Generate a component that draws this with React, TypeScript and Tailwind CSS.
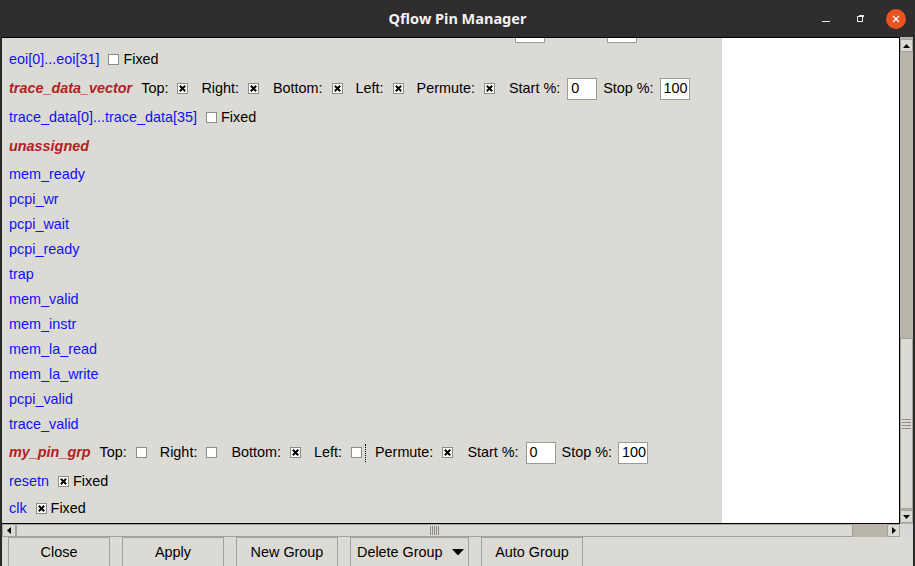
import React from "react";

const CB = ({ on = false }: { on?: boolean }) => (
  <svg width="11" height="11" viewBox="0 0 11 11" className="block shrink-0">
    <rect x="0.5" y="0.5" width="10" height="10" fill="#ffffff" stroke="#8e8c87" />
    {on && (
      <path d="M2.8 2.8 L8.2 8.2 M8.2 2.8 L2.8 8.2" stroke="#000000" strokeWidth="2" />
    )}
  </svg>
);

const Entry = ({ v, hide = false }: { v: string; hide?: boolean }) => (
  <div className="flex h-[22px] w-[30px] shrink-0 items-center border border-[#9e9b96] bg-white pl-[3px] text-black">
    <span className={hide ? "invisible" : ""}>{v}</span>
  </div>
);

type GroupProps = {
  name: string;
  h: string;
  t: boolean;
  r: boolean;
  b: boolean;
  l: boolean;
  p: boolean;
  focusLeft?: boolean;
  hide?: boolean;
};

const Group = ({ name, h, t, r, b, l, p, focusLeft, hide = false }: GroupProps) => {
  const lab = hide ? "invisible" : "";
  return (
    <div className={`flex items-center whitespace-nowrap ${h}`}>
      <span
        className={
          hide
            ? "invisible inline-block w-[71px] overflow-hidden font-bold italic"
            : "font-bold italic text-[#b22222]"
        }
      >
        {name}
      </span>
      <span className={`ml-[9px] ${lab}`}>Top:</span>
      <span className={`ml-[9px] ${lab}`}><CB on={t} /></span>
      <span className={`ml-[13px] ${lab}`}>Right:</span>
      <span className={`ml-[9px] ${lab}`}><CB on={r} /></span>
      <span className={`ml-[14px] ${lab}`}>Bottom:</span>
      <span className={`ml-[9px] ${lab}`}><CB on={b} /></span>
      <span className={`ml-[13px] ${lab}`}>Left:</span>
      <span className={`ml-[9px] flex items-center ${lab}`}>
        <CB on={l} />
        {focusLeft ? (
          <span className="ml-[3px] h-[18px] border-l border-dotted border-black" />
        ) : null}
      </span>
      <span className={`${focusLeft ? "ml-[9px]" : "ml-[13px]"} ${lab}`}>Permute:</span>
      <span className={`ml-[9px] ${lab}`}><CB on={p} /></span>
      <span className={`ml-[14px] ${lab}`}>Start %:</span>
      <span className="ml-[7px]"><Entry v="0" hide={hide} /></span>
      <span className={`ml-[6px] ${lab}`}>Stop %:</span>
      <span className="ml-[6px]"><Entry v="100" hide={hide} /></span>
    </div>
  );
};

const Fixed = ({ name, h, on }: { name: string; h: string; on: boolean }) => (
  <div className={`flex items-center whitespace-nowrap ${h}`}>
    <span className="text-[#1010ff]">{name}</span>
    <span className="ml-[9px]"><CB on={on} /></span>
    <span className="ml-[4px]">Fixed</span>
  </div>
);

const pins = [
  "pcpi_wr",
  "pcpi_wait",
  "pcpi_ready",
  "trap",
  "mem_valid",
  "mem_instr",
  "mem_la_read",
  "mem_la_write",
  "pcpi_valid",
  "trace_valid",
];

const Btn = ({ label, w = "w-[102px]", arrow = false }: { label: string; w?: string; arrow?: boolean }) => (
  <div
    className={`flex h-[30px] shrink-0 items-center border border-[#a3a19c] bg-[#dcdad5] ${w} ${
      arrow ? "justify-between pl-[6px] pr-[4px]" : "justify-center"
    }`}
  >
    <span>{label}</span>
    {arrow ? (
      <svg width="12" height="7" viewBox="0 0 12 7" className="block">
        <path d="M0 0 L12 0 L6 6.5 Z" fill="#000" />
      </svg>
    ) : null}
  </div>
);

export default function App() {
  return (
    <div className="flex h-[566px] w-[915px] flex-col overflow-hidden bg-[#dcdad5] font-['Liberation_Sans',Arial,sans-serif] text-[14.4px] leading-none text-black">
      {/* title bar */}
      <div className="relative flex h-[37px] shrink-0 items-center justify-center bg-[#2f2d2d]">
        <span className="font-['Noto_Sans',sans-serif] text-[14.5px] font-bold text-[#f2f2f2]">
          Qflow Pin Manager
        </span>
        <div className="absolute right-[9px] top-0 flex h-[37px] items-center">
          <div className="mr-[27px] mt-[6px] h-[1.5px] w-[8px] bg-[#e8e8e8]" />
          <div className="relative mr-[22px] h-[7px] w-[7px]">
            <div className="absolute left-0 top-[1px] h-[6px] w-[6px] border border-[#e8e8e8]" />
            <div className="absolute right-0 top-0 h-[2px] w-[5px] border-r border-t border-[#e8e8e8]" />
          </div>
          <div className="flex h-[20px] w-[20px] items-center justify-center rounded-full bg-[#e95420]">
            <svg width="8" height="8" viewBox="0 0 8 8">
              <path d="M1 1 L7 7 M7 1 L1 7" stroke="#ffffff" strokeWidth="1.3" />
            </svg>
          </div>
        </div>
      </div>

      {/* body */}
      <div className="flex flex-1 flex-col border-l-2 border-r-2 border-[#2b2828]">
        <div className="flex h-[487px] shrink-0">
          {/* viewport */}
          <div className="h-[487px] w-[898px] shrink-0 overflow-hidden border-b border-r border-t border-black">
            <div className="flex h-full">
              <div className="h-full w-[720px] shrink-0 bg-[#dcdad5] pl-[7px]">
                <div className="-mt-[20px] flex flex-col">
                  <Group name="eoi_vector" h="h-[27px]" t={false} r={false} b={false} l={false} p={false} hide />
                  <Fixed name="eoi[0]...eoi[31]" h="h-[29px]" on={false} />
                  <Group name="trace_data_vector" h="h-[29px]" t r b l p />
                  <Fixed name="trace_data[0]...trace_data[35]" h="h-[29px]" on={false} />
                  <div className="flex h-[29px] items-center font-bold italic text-[#b22222]">unassigned</div>
                  <div className="flex h-[26px] items-center text-[#1010ff]">mem_ready</div>
                  {pins.map((p) => (
                    <div key={p} className="flex h-[25px] items-center text-[#1010ff]">
                      {p}
                    </div>
                  ))}
                  <div className="h-px" />
                  <Group name="my_pin_grp" h="h-[29px]" t={false} r={false} b l={false} p focusLeft />
                  <Fixed name="resetn" h="h-[28px]" on />
                  <Fixed name="clk" h="h-[27px]" on />
                </div>
              </div>
              <div className="h-full flex-1 bg-white" />
            </div>
          </div>
          {/* vertical scrollbar */}
          <div className="flex w-[13px] shrink-0 flex-col bg-[#bab5ab] pt-[2px]">
            <div className="flex h-[13px] items-center justify-center border border-[#a3a19c] bg-[#dcdad5]">
              <svg width="7" height="4" viewBox="0 0 7 4"><path d="M0 4 L7 4 L3.5 0 Z" fill="#000" /></svg>
            </div>
            <div className="h-[286px]" />
            <div className="flex h-[171px] flex-col items-center justify-center gap-[2px] border border-[#a3a19c] bg-[#dcdad5]">
              <div className="h-px w-[9px] bg-[#8f8c86]" />
              <div className="h-px w-[9px] bg-[#8f8c86]" />
              <div className="h-px w-[9px] bg-[#8f8c86]" />
              <div className="h-px w-[9px] bg-[#8f8c86]" />
            </div>
            <div className="h-[1px]" />
            <div className="flex h-[13px] items-center justify-center border border-[#a3a19c] bg-[#dcdad5]">
              <svg width="7" height="4" viewBox="0 0 7 4"><path d="M0 0 L7 0 L3.5 4 Z" fill="#000" /></svg>
            </div>
          </div>
        </div>

        {/* horizontal scrollbar */}
        <div className="flex h-[13px] shrink-0">
          <div className="flex w-[898px] shrink-0 bg-[#bab5ab]">
            <div className="flex w-[14px] items-center justify-center border border-[#a3a19c] bg-[#dcdad5]">
              <svg width="4" height="7" viewBox="0 0 4 7"><path d="M4 0 L4 7 L0 3.5 Z" fill="#000" /></svg>
            </div>
            <div className="flex w-[837px] items-center justify-center gap-[1px] border border-[#a3a19c] bg-[#dcdad5]">
              <div className="h-[9px] w-px bg-[#8f8c86]" />
              <div className="h-[9px] w-px bg-[#8f8c86]" />
              <div className="h-[9px] w-px bg-[#8f8c86]" />
              <div className="h-[9px] w-px bg-[#8f8c86]" />
              <div className="h-[9px] w-px bg-[#8f8c86]" />
            </div>
            <div className="flex-1" />
            <div className="flex w-[13px] items-center justify-center border border-[#a3a19c] bg-[#dcdad5]">
              <svg width="4" height="7" viewBox="0 0 4 7"><path d="M0 0 L0 7 L4 3.5 Z" fill="#000" /></svg>
            </div>
          </div>
          <div className="flex-1 bg-[#d8d8d8]" />
        </div>

        {/* buttons */}
        <div className="flex flex-1 items-start gap-[12px] pl-[6px]">
          <Btn label="Close" />
          <Btn label="Apply" />
          <Btn label="New Group" />
          <Btn label="Delete Group" w="w-[119px]" arrow />
          <Btn label="Auto Group" />
        </div>
      </div>
    </div>
  );
}
